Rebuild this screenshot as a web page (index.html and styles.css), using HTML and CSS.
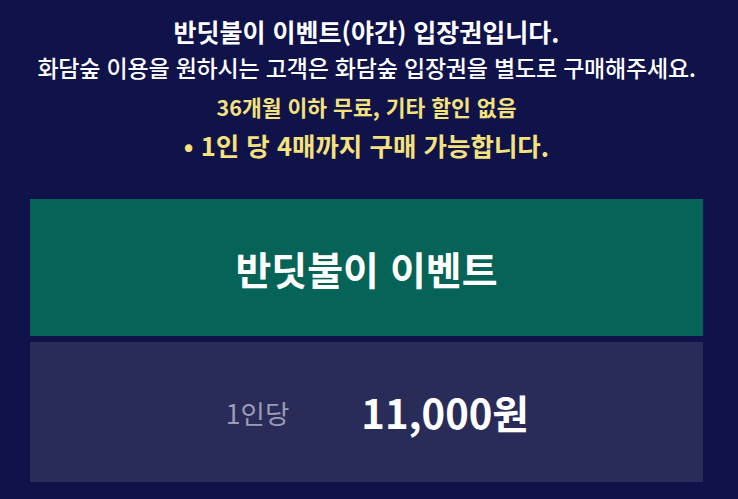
FILE: index.html
```html
<!DOCTYPE html>
<html lang="ko">
<head>
<meta charset="utf-8">
<link rel="stylesheet" href="styles.css">
</head>
<body>
<div class="page">
  <div class="notice">
    <p class="title">반딧불이 이벤트(야간) 입장권입니다.</p>
    <p class="sub">화담숲 이용을 원하시는 고객은 화담숲 입장권을 별도로 구매해주세요.</p>
    <p class="note">36개월 이하 무료, 기타 할인 없음</p>
    <p class="limit">• 1인 당 4매까지 구매 가능합니다.</p>
  </div>
  <div class="event">반딧불이 이벤트</div>
  <div class="price-box">
    <span class="unit">1인당</span>
    <span class="price">11,000원</span>
  </div>
</div>
</body>
</html>
```
FILE: styles.css
```css
html, body {
  margin: 0;
  padding: 0;
  background: #10124a;
}
body {
  font-family: "Noto Sans CJK KR", "Noto Sans", sans-serif;
  color: #ffffff;
}
.page {
  display: flex;
  flex-direction: column;
  padding: 14px 35px 0 30px;
}
.notice {
  text-align: center;
}
.notice p {
  margin: 0;
}
.title {
  font-size: 25px;
  font-weight: 700;
  line-height: 34px;
}
.sub {
  font-size: 23px;
  font-weight: 500;
  line-height: 38px;
  letter-spacing: -0.2px;
}
.note {
  margin-top: 3px !important;
  font-size: 21.5px;
  font-weight: 700;
  line-height: 36px;
  color: #f4e27c;
}
.limit {
  font-size: 25.5px;
  font-weight: 700;
  line-height: 40px;
  color: #f4e27c;
}
.event {
  margin-top: 34px;
  height: 137px;
  background: #056357;
  display: flex;
  align-items: center;
  justify-content: center;
  font-size: 39px;
  font-weight: 700;
}
.price-box {
  margin-top: 6px;
  height: 140px;
  background: #292b58;
  display: flex;
  align-items: center;
  justify-content: center;
  gap: 72px;
  padding-left: 22px;
}
.unit {
  font-size: 26.5px;
  font-weight: 400;
  color: #9a9bb5;
}
.price {
  font-size: 40px;
  font-weight: 700;
}
```
